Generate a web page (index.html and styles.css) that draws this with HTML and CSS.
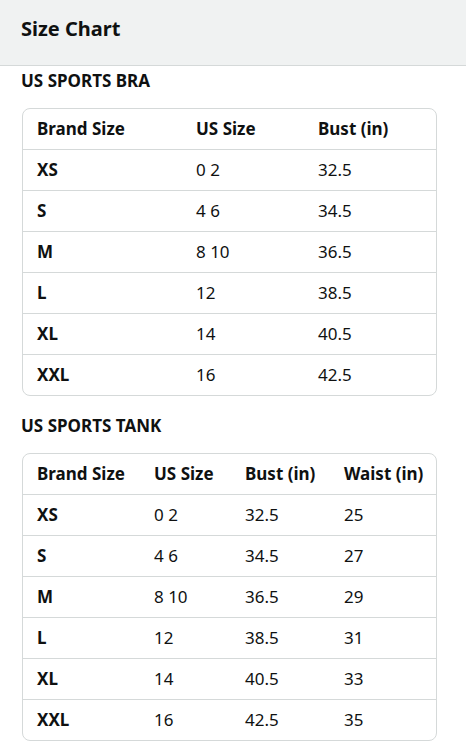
FILE: index.html
```html
<!DOCTYPE html>
<html>
<head>
<meta charset="utf-8">
<link rel="stylesheet" href="styles.css">
</head>
<body>
<header class="top">
  <h1 class="title">Size Chart</h1>
</header>
<main class="content">
  <h2 class="section">US SPORTS BRA</h2>
  <div class="box">
    <table class="chart chart-bra">
      <colgroup><col class="b1"><col class="b2"><col class="b3"></colgroup>
      <thead><tr><th>Brand Size</th><th>US Size</th><th>Bust (in)</th></tr></thead>
      <tbody>
        <tr><th>XS</th><td>0 2</td><td>32.5</td></tr>
        <tr><th>S</th><td>4 6</td><td>34.5</td></tr>
        <tr><th>M</th><td>8 10</td><td>36.5</td></tr>
        <tr><th>L</th><td>12</td><td>38.5</td></tr>
        <tr><th>XL</th><td>14</td><td>40.5</td></tr>
        <tr><th>XXL</th><td>16</td><td>42.5</td></tr>
      </tbody>
    </table>
  </div>
  <h2 class="section">US SPORTS TANK</h2>
  <div class="box">
    <table class="chart chart-tank">
      <colgroup><col class="t1"><col class="t2"><col class="t3"><col class="t4"></colgroup>
      <thead><tr><th>Brand Size</th><th>US Size</th><th>Bust (in)</th><th>Waist (in)</th></tr></thead>
      <tbody>
        <tr><th>XS</th><td>0 2</td><td>32.5</td><td>25</td></tr>
        <tr><th>S</th><td>4 6</td><td>34.5</td><td>27</td></tr>
        <tr><th>M</th><td>8 10</td><td>36.5</td><td>29</td></tr>
        <tr><th>L</th><td>12</td><td>38.5</td><td>31</td></tr>
        <tr><th>XL</th><td>14</td><td>40.5</td><td>33</td></tr>
        <tr><th>XXL</th><td>16</td><td>42.5</td><td>35</td></tr>
      </tbody>
    </table>
  </div>
</main>
</body>
</html>
```
FILE: styles.css
```css
* { box-sizing: border-box; }
html, body { margin: 0; padding: 0; background: #fff; }
body {
  font-family: "Noto Sans", "Open Sans", sans-serif;
  color: #0f1111;
  width: 466px;
  overflow: hidden;
}
.top {
  height: 66px;
  background: #f0f2f2;
  border-bottom: 1px solid #d5d9d9;
  display: flex;
  align-items: center;
  padding: 0 21px;
}
.title {
  margin: 0;
  font-size: 20px;
  font-weight: 700;
  line-height: 24px;
  padding-bottom: 7px;
}
.content {
  padding: 0 29px 0 22px;
}
.section {
  margin: 0;
  font-size: 17px;
  font-weight: 700;
  line-height: 24px;
  padding: 3px 0 15px;
  margin-left: -1px;
}
.box {
  border: 1px solid #d5d9d9;
  border-radius: 8px;
  overflow: hidden;
  margin-bottom: 15px;
}
.chart {
  width: 100%;
  border-collapse: collapse;
  table-layout: fixed;
  font-size: 17px;
}
.chart th, .chart td {
  height: 41px;
  padding: 0 0 0 14px;
  text-align: left;
  vertical-align: middle;
  line-height: 22px;
  white-space: nowrap;
}
.chart thead th { height: 40px; }
.chart th { font-weight: 700; }
.chart td { font-weight: 400; }
.chart tbody tr { border-top: 1px solid #d5d9d9; }
.b1 { width: 159px; }
.b2 { width: 122px; }
.b3 { width: auto; }
.t1 { width: 117px; }
.t2 { width: 91px; }
.t3 { width: 99px; }
.t4 { width: auto; }
```
